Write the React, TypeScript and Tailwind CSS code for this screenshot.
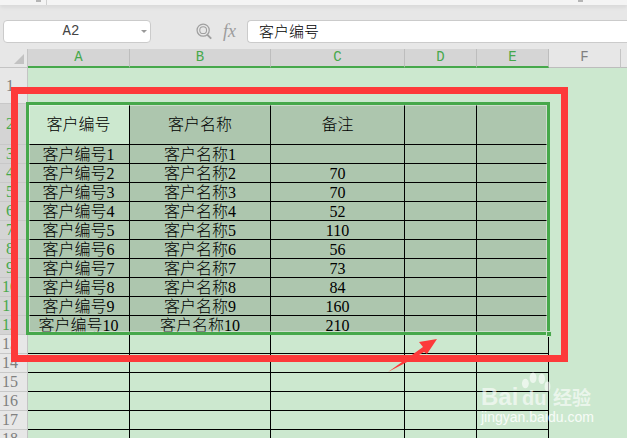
const columns = [
  { name: "A", width: "w-[102px]" },
  { name: "B", width: "w-[141px]" },
  { name: "C", width: "w-[134px]" },
  { name: "D", width: "w-[72px]" },
  { name: "E", width: "w-[72px]" },
];

const notes = ["", "70", "70", "52", "110", "56", "73", "84", "160", "210"];

const rows = [
  { no: 1, height: "h-[36px]", cells: null },
  { no: 2, height: "h-[41px]", cells: ["客户编号", "客户名称", "备注", "", ""] },
  ...notes.map((note, i) => ({
    no: i + 3,
    height: "h-[19px]",
    cells: [`客户编号${i + 1}`, `客户名称${i + 1}`, note, "", ""],
  })),
  ...[13, 14, 15, 16, 17, 18].map((no) => ({
    no,
    height: "h-[19px]",
    cells: ["", "", "", "", ""],
  })),
];

const isSelected = (no: number) => no >= 2 && no <= 12;

const Toolbar = () => (
  <div className="h-[49px] bg-[#e7e7e7] relative">
    <div className="h-[5px] bg-[#f4f4f4] flex shadow-[0_2px_4px_rgba(0,0,0,0.08)]">
      <div className="ml-[36px] w-[5px] h-[2px] bg-[#b5b5b5]" />
      <div className="ml-[5px] w-px bg-[#d0d0d0]" />
      <div className="ml-auto mr-[44px] w-[5px] h-[2px] bg-[#b5b5b5]" />
    </div>
    <div className="flex items-center pt-[13px]">
      <div className="ml-[3px] w-[148px] h-[23px] bg-white border border-[#cbcbcb] rounded-[4px] flex items-center">
        <span className="flex-1 text-center text-[14px] text-[#444] font-['Liberation_Mono',monospace]">A2</span>
        <span className="ml-[3px] mr-[3px] w-0 h-0 border-x-[3px] border-x-transparent border-t-[3px] border-t-[#999]" />
      </div>
      <svg className="ml-[45px] w-[17px] h-[17px] text-[#a0a0a0]" viewBox="0 0 19 19" fill="none" stroke="currentColor">
        <circle cx="8" cy="8" r="6.8" strokeWidth="1.4" />
        <circle cx="8" cy="8" r="3.8" strokeWidth="1.2" />
        <path d="M12.5 13l4.5 4.5" strokeWidth="2.2" />
      </svg>
      <span className="ml-[10px] w-[18px] text-[18px] italic text-[#9c9c9c] font-['Liberation_Serif',serif]">fx</span>
      <div className="ml-[6px] flex-1 h-[23px] bg-white border-y border-l border-[#cbcbcb] rounded-l-[4px] pl-[11px] flex items-center text-[15px] font-light text-black font-['Noto_Sans_CJK_SC',sans-serif]">
        客户编号
      </div>
    </div>
  </div>
);

const ColumnHeader = () => (
  <div className="h-[19px] flex bg-[#e7e7e7] font-['Liberation_Mono',monospace] text-[14px]">
    <div className="w-[28px] relative border-r border-[#c4c4c4] border-b border-b-[#c4c4c4]">
      <div className="absolute left-[14px] top-[5px] w-0 h-0 border-l-[10px] border-l-transparent border-b-[10px] border-b-[#c2c2c2]" />
    </div>
    {columns.map((col) => (
      <div
        key={col.name}
        className={`${col.width} bg-[#d5d5d5] text-[#46a84b] text-center leading-[17px] border-r border-r-[#bdbdbd] border-b-2 border-b-[#46a84b]`}
      >
        {col.name}
      </div>
    ))}
    <div className="w-[72px] text-[#808080] text-center leading-[17px] border-r border-r-[#c4c4c4] border-b border-b-[#bdbdbd]">F</div>
    <div className="flex-1 border-b border-b-[#bdbdbd]" />
  </div>
);

const Grid = () => (
  <div className="font-['Liberation_Serif','Noto_Sans_CJK_SC',serif] text-[16px] font-light text-black">
    {rows.map((row) => (
      <div key={row.no} className={`${row.height} flex`}>
        <div
          className={`w-[28px] shrink-0 flex items-center justify-center pr-[7px] border-r border-r-[#c4c4c4] border-b border-b-[#c8c8c8] ${
            isSelected(row.no) ? "bg-[#d4d4d4] text-[#46a84b]" : "bg-[#e7e7e7] text-[#808080]"
          }`}
        >
          {row.no}
        </div>
        {columns.map((col, i) => (
          <div
            key={col.name}
            className={`${col.width} shrink-0 flex items-center justify-center pt-px whitespace-nowrap ${
              row.cells ? "border-r border-b border-black" : ""
            } ${isSelected(row.no) && !(row.no === 2 && i === 0) ? "bg-[#adc6ae]" : ""}`}
          >
            {row.cells ? row.cells[i] : null}
          </div>
        ))}
      </div>
    ))}
  </div>
);

const Watermark = () => (
  <div className="absolute left-[481px] top-[368px] w-[116px] h-[62px] text-white/60 font-['Liberation_Sans',sans-serif]">
    <svg className="absolute left-[37px] top-[4px] w-[34px] h-[25px]" viewBox="0 0 32 26" fill="currentColor">
      <ellipse cx="6" cy="12" rx="3.6" ry="5" />
      <ellipse cx="14" cy="6" rx="3.6" ry="5.5" />
      <ellipse cx="23" cy="7" rx="3.4" ry="5.5" />
      <ellipse cx="29" cy="15" rx="3" ry="5" />
    </svg>
    <span className="absolute left-0 top-[14px] text-[24px] leading-[30px] font-bold">Bai</span>
    <span className="absolute left-[41px] top-[20px] text-[20px] leading-[20px] font-bold">du</span>
    <span className="absolute left-[72px] top-[18px] text-[19px] leading-[22px] whitespace-nowrap font-['Noto_Sans_CJK_SC',sans-serif] font-bold">经验</span>
    <span className="absolute left-0 top-[40px] text-[14px] leading-[18px] whitespace-nowrap text-white/85">jingyan.baidu.com</span>
  </div>
);

export default function App() {
  return (
    <div className="relative w-[627px] h-[438px] overflow-hidden bg-[#cce8cf]">
      <Toolbar />
      <ColumnHeader />
      <Grid />

      {/* selection box */}
      <div className="absolute left-[26px] top-[102px] w-[524px] h-[233px] border-3 border-[#46a84b]">
        <div className="w-full h-full border border-white/40" />
      </div>
      <div className="absolute left-[546px] top-[331px] w-[6px] h-[6px] bg-[#46a84b] border border-white/70" />

      <Watermark />

      {/* red annotation */}
      <div className="absolute left-[11px] top-[87px] w-[557px] h-[275px] border-[7px] border-[#fd3a3a]" />
      <svg className="absolute left-[385px] top-[336px] w-[55px] h-[40px]" viewBox="0 0 55 40" fill="#fd3a3a">
        <polygon points="52,3 34,6 38,11 3,36 24,25 39,16 42,18" />
      </svg>
    </div>
  );
}
